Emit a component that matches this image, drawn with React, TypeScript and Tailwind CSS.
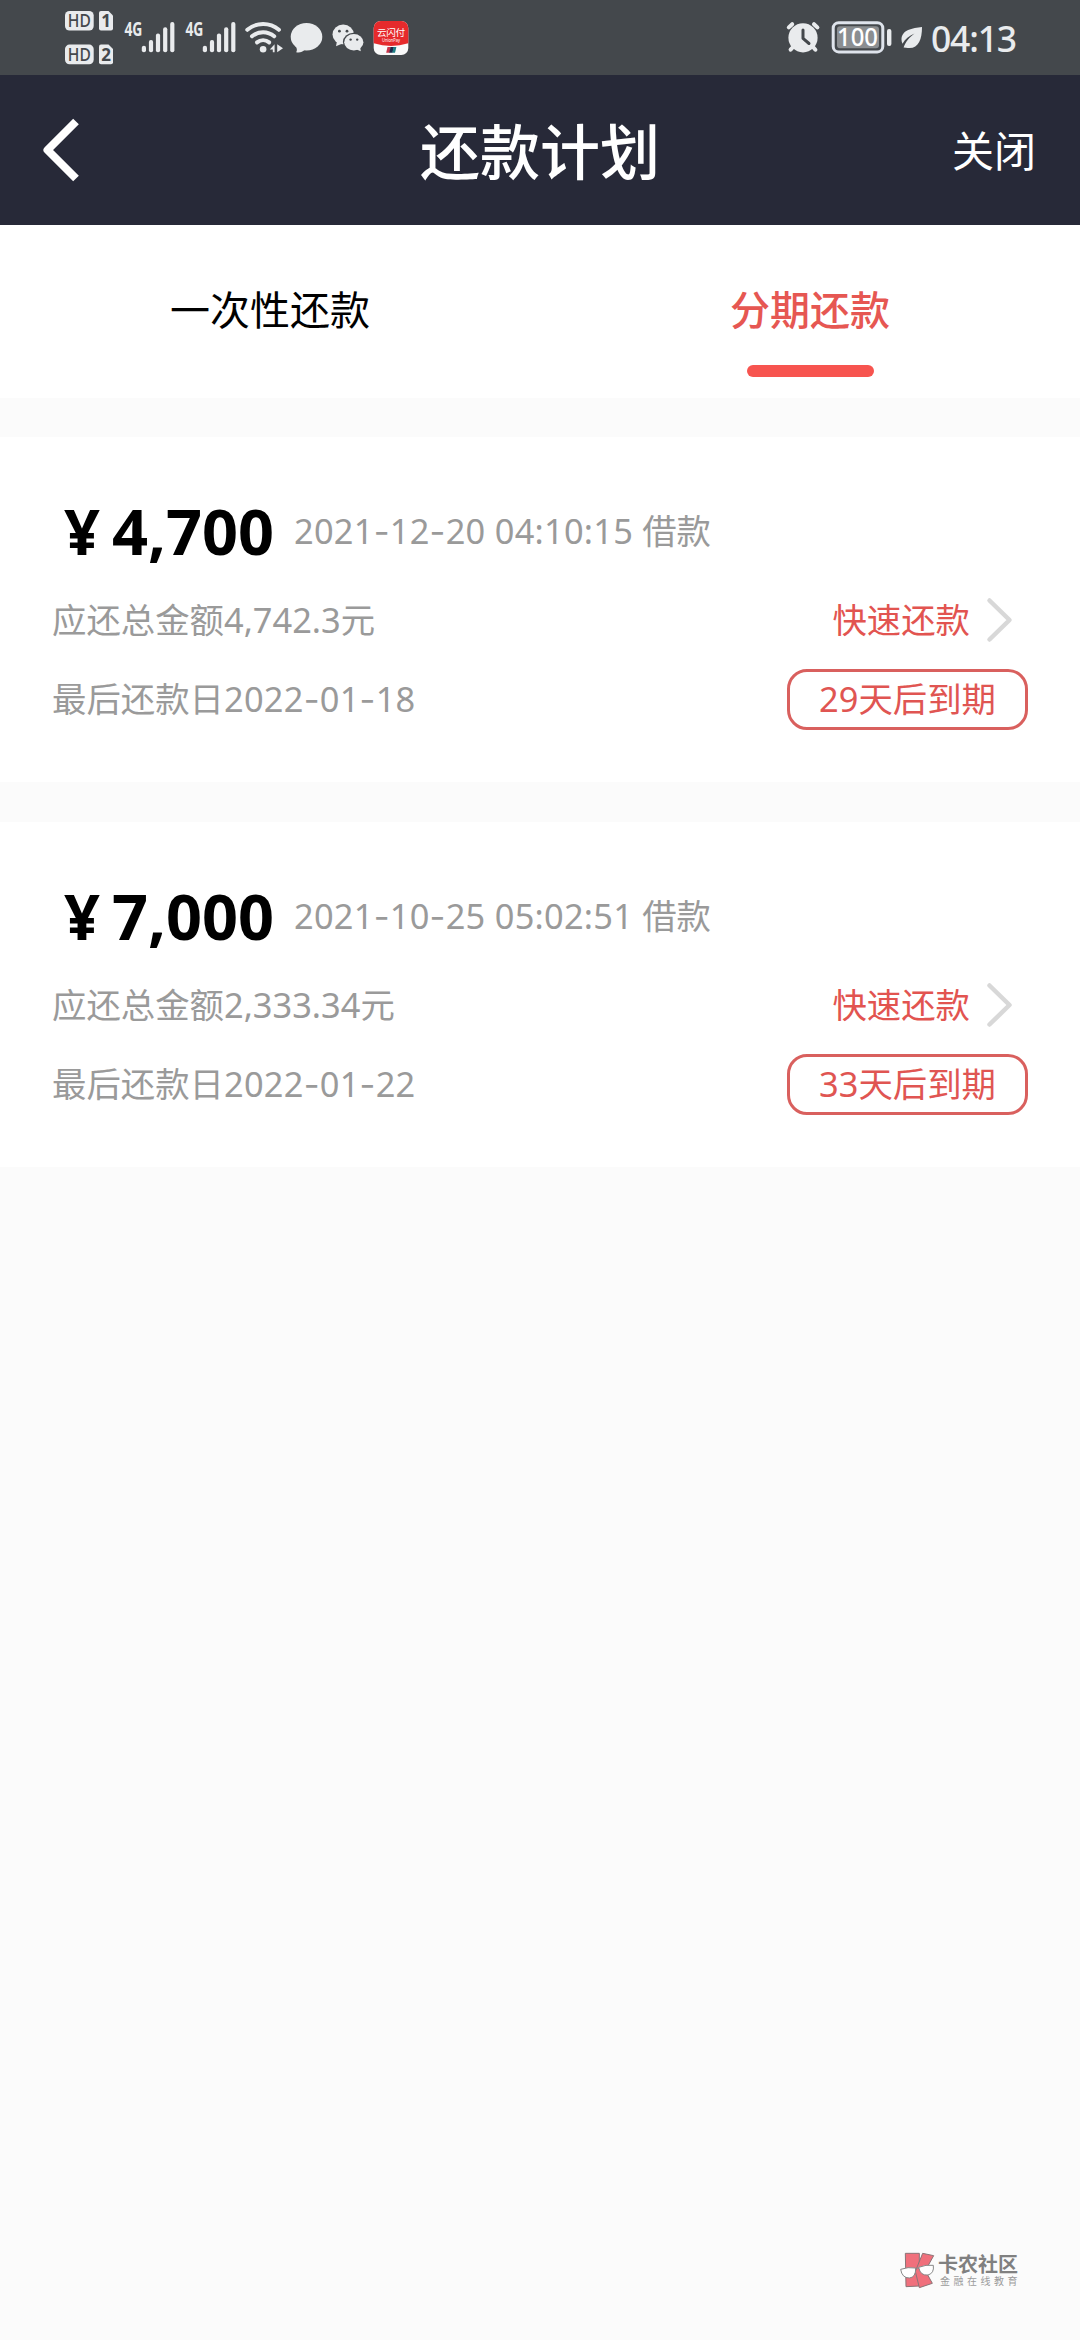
interface Loan {
  id: string;
  amount: string;
  borrowedAt: string;
  total: string;
  dueDate: string;
  daysLeft: number;
}

const loans: Loan[] = [
  {
    id: 'loan-1',
    amount: '4,700',
    borrowedAt: '2021-12-20 04:10:15',
    total: '4,742.3',
    dueDate: '2022-01-18',
    daysLeft: 29,
  },
  {
    id: 'loan-2',
    amount: '7,000',
    borrowedAt: '2021-10-25 05:02:51',
    total: '2,333.34',
    dueDate: '2022-01-22',
    daysLeft: 33,
  },
];

// 信号格：每一格的横向偏移和顶部位置
const signalBars = [
  { dx: 0, top: 45.7 },
  { dx: 7.1, top: 40 },
  { dx: 14.1, top: 33.5 },
  { dx: 21.3, top: 27.3 },
  { dx: 28.4, top: 22 },
];

// 日期里的连字符用更宽的字形
function DateText({ value }: { value: string }) {
  const parts = value.split('-');
  return (
    <span className="tracking-[0.25px]">
      {parts.map((part, i) => (
        <span key={i}>
          {i > 0 && <span className="font-['Inter']">-</span>}
          {part}
        </span>
      ))}
    </span>
  );
}

function HdIcon() {
  return (
    <svg width="50" height="75" viewBox="65 0 50 75" className="shrink-0">
      {[
        { y: 11, sim: '1' },
        { y: 44.6, sim: '2' },
      ].map(({ y, sim }) => (
        <g key={sim} transform={`translate(0 ${y})`}>
          <rect x="65" y="0" width="28.7" height="19.6" rx="4.5" fill="#e9ebed" />
          <text
            x="79.3"
            y="16.3"
            textAnchor="middle"
            textLength="23"
            lengthAdjust="spacingAndGlyphs"
            fontSize="18.5"
            fontWeight="500"
            fill="#44484c"
          >
            HD
          </text>
          <path d="M101 0H108.5L113 4.5V17.6a2 2 0 0 1-2 2H101a2 2 0 0 1-2-2V2a2 2 0 0 1 2-2Z" fill="#e9ebed" />
          <text x="106" y="16" textAnchor="middle" fontSize="17" fontWeight="700" fill="#44484c">
            {sim}
          </text>
        </g>
      ))}
    </svg>
  );
}

function SignalIcon() {
  return (
    <svg width="52" height="75" viewBox="124 0 52 75" className="shrink-0">
      <text
        x="124.4"
        y="36"
        textLength="18"
        lengthAdjust="spacingAndGlyphs"
        fontSize="19.5"
        fontWeight="700"
        fill="#e9ebed"
      >
        4G
      </text>
      {signalBars.map(({ dx, top }) => (
        <rect key={dx} x={141.8 + dx} y={top} width="4.2" height={52.3 - top} rx="2" fill="#e9ebed" />
      ))}
    </svg>
  );
}

function WifiIcon() {
  return (
    <svg width="39" height="75" viewBox="245 0 39 75" className="shrink-0">
      <g fill="none" stroke="#e9ebed" strokeWidth="4" strokeLinecap="round">
        <path d="M247.3 29.8C256.5 22 269.7 22 278.9 29.8" />
        <path d="M252 36.3C258.5 30.8 267.7 30.8 274.2 36.3" />
        <path d="M257 42.4C260.6 39.4 265.6 39.4 269.2 42.4" />
      </g>
      <circle cx="263.1" cy="49.2" r="3.3" fill="#e9ebed" />
      <path d="M274.6 44.3V52.3H272.8V49.5H269.8ZM277.2 52.3V44.3L283 48.3Z" fill="#e9ebed" />
    </svg>
  );
}

function BubbleIcon() {
  return (
    <svg width="33" height="75" viewBox="290 0 33 75" className="shrink-0">
      <ellipse cx="306.5" cy="36.7" rx="15.8" ry="13.8" fill="#e9ebed" />
      <path d="M295.5 45.5C297 48.5 297.4 50 296.2 52.2C299.8 53 302.6 51.8 305 49.5Z" fill="#e9ebed" />
    </svg>
  );
}

function WechatIcon() {
  return (
    <svg width="32" height="75" viewBox="332 0 32 75" className="shrink-0">
      <ellipse cx="343.2" cy="34.4" rx="10.7" ry="9.9" fill="#e9ebed" />
      <path d="M337 41L336 46.3L342.5 43.5Z" fill="#e9ebed" />
      <ellipse cx="353.6" cy="42" rx="10.7" ry="9.3" fill="#44484c" />
      <ellipse cx="353.8" cy="42.3" rx="9.6" ry="8.2" fill="#e9ebed" />
      <path d="M355.5 49L360.8 51.3L360 46.5Z" fill="#e9ebed" />
      <circle cx="339.4" cy="31.2" r="1.4" fill="#44484c" />
      <circle cx="347" cy="31.2" r="1.4" fill="#44484c" />
      <circle cx="350.6" cy="39.6" r="1.2" fill="#44484c" />
      <circle cx="357.2" cy="39.6" r="1.2" fill="#44484c" />
    </svg>
  );
}

function UnionPayIcon() {
  return (
    <svg width="36" height="75" viewBox="372 0 36 75" className="shrink-0">
      <rect x="372.7" y="21" width="34.6" height="34" rx="7" fill="#fafafa" />
      <path d="M372.7 43.3V28a7 7 0 0 1 7-7H400.3a7 7 0 0 1 7 7V43.3Q390 48.5 372.7 43.3Z" fill="#e62a2c" />
      <text x="390" y="35.5" textAnchor="middle" textLength="28" fontSize="9.6" fill="#fff">
        云闪付
      </text>
      <text x="390" y="41.5" textAnchor="middle" textLength="18" lengthAdjust="spacingAndGlyphs" fontSize="5" fill="#fff">
        UnionPay
      </text>
      <path d="M386.5 47H390L388.6 52.7H385.2Z" fill="#c8364a" />
      <path d="M389.6 47H393L391.6 52.7H388.2Z" fill="#1d2a4a" />
      <path d="M392.6 47H395.4L394 52.7H391.2Z" fill="#1f7f86" />
    </svg>
  );
}

function AlarmIcon() {
  return (
    <svg width="36" height="75" viewBox="785 0 36 75" className="shrink-0">
      <circle cx="803" cy="37.8" r="14.6" fill="#e9ebed" />
      <g stroke="#e9ebed" strokeLinecap="round" strokeWidth="4">
        <path d="M788.8 27.4L792.2 24.2" />
        <path d="M817.4 27.4L814 24.2" />
        <path d="M793.5 46.5L790.6 49.7" />
        <path d="M812.6 46.5L815.4 49.7" />
      </g>
      <path
        d="M803 30V38.3L809 43.5"
        fill="none"
        stroke="#44484c"
        strokeWidth="3"
        strokeLinecap="round"
        strokeLinejoin="round"
      />
    </svg>
  );
}

function BatteryIcon() {
  return (
    <svg width="61" height="75" viewBox="831 0 61 75" className="shrink-0">
      <rect x="833.2" y="22.7" width="49.6" height="29.2" rx="5.5" fill="none" stroke="#dfe4ec" strokeWidth="3" />
      <rect x="837" y="26.3" width="42" height="22" rx="3" fill="#8b8e91" />
      <rect x="887" y="29" width="4.4" height="17" rx="2" fill="#e9ebed" />
      <text
        x="857.5"
        y="46.2"
        textAnchor="middle"
        textLength="41"
        lengthAdjust="spacingAndGlyphs"
        fontSize="26"
        fontWeight="500"
        fill="#fff"
      >
        100
      </text>
    </svg>
  );
}

function LeafIcon() {
  return (
    <svg width="23" height="75" viewBox="900 0 23 75" className="shrink-0">
      <path
        d="M922 27C912.5 28.3 901.5 29.5 901.5 39.8C901.5 41.3 901.9 42.6 902.5 43.7C905 39 909 36 914.5 33.5C909.5 37.5 905.5 41.5 903.6 47.6L906 47.7C918 50 922 40.5 922 27Z"
        fill="#e9ebed"
      />
    </svg>
  );
}

function StatusBar() {
  return (
    <div className="flex h-[75px] shrink-0 items-center bg-[#44484c] pl-[65px] pr-[64px]">
      <HdIcon />
      <div className="ml-[9px] flex gap-[9px]">
        <SignalIcon />
        <SignalIcon />
      </div>
      <div className="ml-2 flex">
        <WifiIcon />
      </div>
      <div className="ml-1.5 flex gap-[9px]">
        <BubbleIcon />
        <WechatIcon />
        <UnionPayIcon />
      </div>
      <div className="ml-auto flex items-center">
        <AlarmIcon />
        <div className="ml-2.5 flex gap-2">
          <BatteryIcon />
          <LeafIcon />
        </div>
        <span className="ml-2 w-[85px] whitespace-nowrap pt-0.5 text-[35.5px] font-medium leading-none tracking-[-1.2px] text-[#e9ebed]">
          04:13
        </span>
      </div>
    </div>
  );
}

function Header() {
  return (
    <header className="grid h-[150px] shrink-0 grid-cols-3 items-center bg-[#272938] font-medium text-white">
      <button className="pl-10" aria-label="返回">
        <svg width="42" height="66" viewBox="40 117 42 66">
          <path
            d="M76 121.5L47.5 150L76 178.5"
            fill="none"
            stroke="#fff"
            strokeWidth="8"
            strokeLinejoin="round"
          />
        </svg>
      </button>
      <h1 className="pt-1 text-center text-[60px] leading-none">还款计划</h1>
      <span className="pr-[44px] pt-0.5 text-right text-[42px] font-normal leading-none">关闭</span>
    </header>
  );
}

function Tabs() {
  return (
    <nav className="grid h-[173px] shrink-0 grid-cols-2 bg-white pt-[65px] text-center text-[40px] leading-[40px]">
      <div className="text-black">一次性还款</div>
      <div className="flex flex-col items-center text-[#e65752]">
        <span className="font-medium">分期还款</span>
        <span className="mt-[35px] h-3 w-[127px] rounded-full bg-[#f7544f]" />
      </div>
    </nav>
  );
}

function LoanCard({ loan }: { loan: Loan }) {
  return (
    <section className="h-[345px] shrink-0 bg-white px-[52px] pt-[62px] text-[34.4px] leading-[64px] text-[#9a9a9a]">
      <div className="flex">
        <div className="flex text-[63px] font-bold text-black">
          <span className="w-[60px] text-center">¥</span>
          <span className="w-[162px]">{loan.amount}</span>
        </div>
        <span className="ml-5 whitespace-nowrap">
          <DateText value={loan.borrowedAt} /> 借款
        </span>
      </div>
      <div className="mt-6 flex items-center justify-between">
        <span>应还总金额{loan.total}元</span>
        <div className="flex items-center pr-[14px] text-[#e25450]">
          快速还款
          <svg width="28" height="46" viewBox="0 0 28 46" className="ml-4">
            <path
              d="M3.5 3.5L23.5 23L3.5 42.5"
              fill="none"
              stroke="#d8d8d8"
              strokeWidth="4.5"
              strokeLinecap="round"
              strokeLinejoin="round"
            />
          </svg>
        </div>
      </div>
      <div className="mt-[15px] flex items-center justify-between">
        <span>
          最后还款日
          <DateText value={loan.dueDate} />
        </span>
        <span className="flex h-[61px] w-[241px] items-center justify-center rounded-[20px] border-3 border-[#d9605e] pb-0.5 text-[#e05552]">
          {loan.daysLeft}天后到期
        </span>
      </div>
    </section>
  );
}

function Watermark() {
  return (
    <div className="mb-[50px] ml-auto mr-[60px] mt-auto flex items-center">
      <svg width="36" height="38" viewBox="60 66 108 114">
        <g fill="#f0707c" stroke="#8b7477" strokeWidth="3" strokeLinejoin="round">
          <path d="M76 70H118V168L78 170Z" />
          <path d="M128 70L161 77L136 122L157 160L118 173L106 124Z" />
        </g>
        <g fill="#fff" stroke="#888" strokeWidth="3">
          <path d="M62 118Q84 110 107 114Q108 142 88 144Q66 144 62 118Z" />
          <path d="M116 112Q138 103 160 106Q163 130 144 135Q121 138 116 112Z" />
          <path d="M107 118Q111 112 117 115" fill="none" />
        </g>
      </svg>
      <div className="ml-0.5 flex w-[82px] flex-col">
        <span className="text-[20px] font-bold leading-[21px] text-[#808080]">卡农社区</span>
        <span className="whitespace-nowrap pl-0.5 text-[10px] leading-[13px] tracking-[3.5px] text-[#9c9c9c]">
          金融在线教育
        </span>
      </div>
    </div>
  );
}

export default function App() {
  return (
    <div className="flex h-[2340px] w-[1080px] flex-col overflow-hidden bg-[#fbfbfb] font-['Noto_Sans','Noto_Sans_CJK_SC',sans-serif]">
      <StatusBar />
      <Header />
      <Tabs />
      <main className="mt-[39px] flex flex-col gap-10">
        {loans.map((loan) => (
          <LoanCard key={loan.id} loan={loan} />
        ))}
      </main>
      <Watermark />
    </div>
  );
}
